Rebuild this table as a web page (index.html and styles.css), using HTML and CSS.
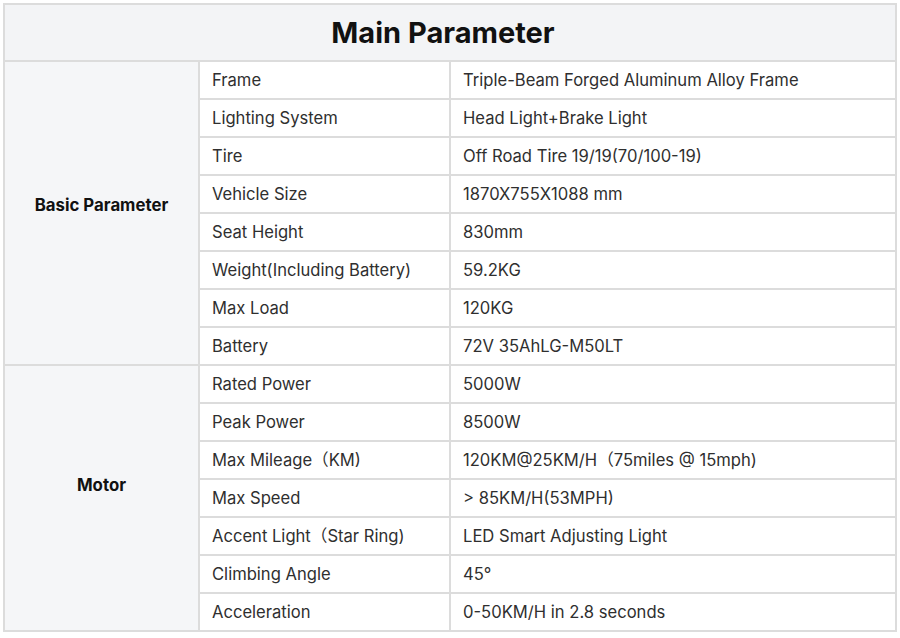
FILE: index.html
```html
<!DOCTYPE html>
<html>
<head>
<meta charset="utf-8">
<link rel="stylesheet" href="styles.css">
</head>
<body>
<table class="spec">
<colgroup><col class="c1"><col class="c2"><col class="c3"></colgroup>
<thead>
<tr><th colspan="3" class="title">Main Parameter</th></tr>
</thead>
<tbody>
<tr><td rowspan="8" class="group group-basic">Basic Parameter</td><td>Frame</td><td>Triple-Beam Forged Aluminum Alloy Frame</td></tr>
<tr><td>Lighting System</td><td>Head Light+Brake Light</td></tr>
<tr><td>Tire</td><td>Off Road Tire 19/19(70/100-19)</td></tr>
<tr><td>Vehicle Size</td><td>1870X755X1088 mm</td></tr>
<tr><td>Seat Height</td><td>830mm</td></tr>
<tr><td>Weight(Including Battery)</td><td>59.2KG</td></tr>
<tr><td>Max Load</td><td>120KG</td></tr>
<tr><td>Battery</td><td>72V 35AhLG-M50LT</td></tr>
<tr><td rowspan="7" class="group group-motor">Motor</td><td>Rated Power</td><td>5000W</td></tr>
<tr><td>Peak Power</td><td>8500W</td></tr>
<tr><td>Max Mileage（KM)</td><td>120KM@25KM/H（75miles @ 15mph)</td></tr>
<tr><td>Max Speed</td><td>&gt; 85KM/H(53MPH)</td></tr>
<tr><td>Accent Light（Star Ring)</td><td>LED Smart Adjusting Light</td></tr>
<tr><td>Climbing Angle</td><td>45°</td></tr>
<tr><td>Acceleration</td><td>0-50KM/H in 2.8 seconds</td></tr>
</tbody>
</table>
</body>
</html>
```
FILE: styles.css
```css
html, body { background: #fff; }
body {
  margin: 3px 0 0 3px;
  font-family: Inter, "Noto Sans CJK SC", sans-serif;
  color: #2f2f2f;
}
.spec {
  border-collapse: collapse;
  table-layout: fixed;
  width: 892px;
}
.c1 { width: 195px; }
.c2 { width: 251px; }
.c3 { width: 446px; }
.spec th, .spec td {
  border: 2px solid #dcdcdc;
}
.title {
  height: 57px;
  box-sizing: border-box;
  background: #f3f4f6;
  font-size: 29px;
  font-weight: 700;
  color: #111;
  text-align: center;
  padding: 0 14px 0 0;
}
.spec td {
  height: 38px;
  box-sizing: border-box;
  padding: 0 12px;
  font-size: 16.6px;
  line-height: 20px;
}
.spec td.group {
  background: #f5f6f8;
  font-weight: 700;
  font-size: 16.8px;
  color: #111;
  text-align: center;
  padding: 0;
}
.spec td.group-basic { padding-bottom: 16px; }
.spec td.group-motor { padding-bottom: 26px; }
```
